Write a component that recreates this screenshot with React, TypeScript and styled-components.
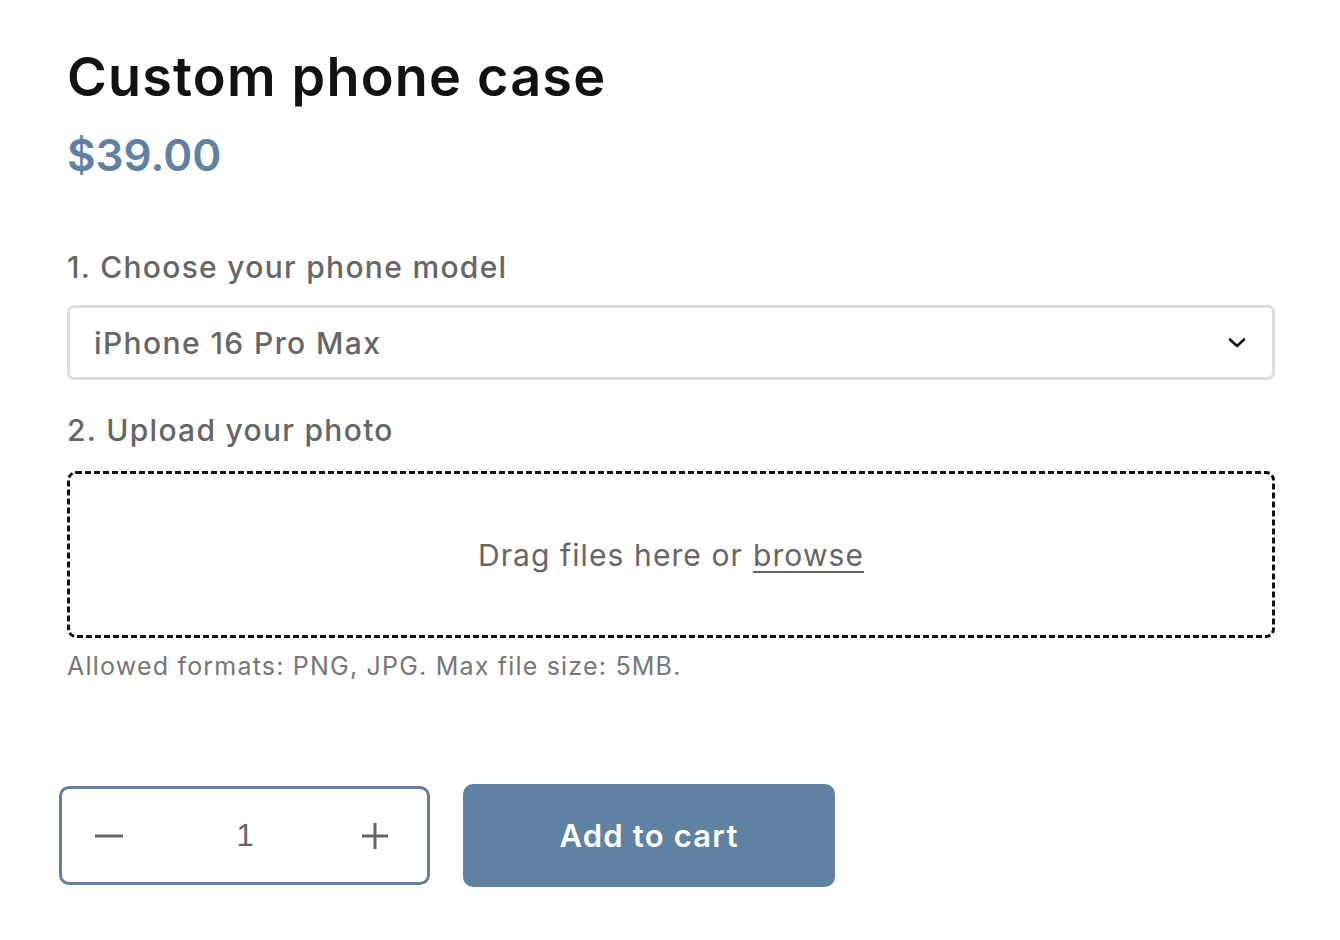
import React from "react";
import styled, { createGlobalStyle } from "styled-components";

const Global = createGlobalStyle`
  html, body { margin: 0; padding: 0; background: #ffffff; }
  body { font-family: "Inter", "Noto Sans", sans-serif; }
  * { box-sizing: border-box; }
`;

const Page = styled.div`
  padding: 44px 65px 0 67px;
  width: 1340px;
  display: flex;
  flex-direction: column;
`;

const Title = styled.h1`
  margin: 0;
  font-size: 54px;
  line-height: 66px;
  font-weight: 600;
  color: #121212;
  letter-spacing: 1.2px;
`;

const Price = styled.div`
  margin-top: 17px;
  font-size: 44px;
  line-height: 56px;
  font-weight: 600;
  color: #5f82a3;
`;

const Label = styled.div<{ $top: number }>`
  margin-top: ${(p) => p.$top}px;
  font-size: 30px;
  line-height: 40px;
  font-weight: 500;
  color: #666666;
  letter-spacing: 1.3px;
`;

const Select = styled.div`
  margin-top: 18px;
  height: 75px;
  border: 3px solid #dedede;
  border-radius: 7px;
  display: flex;
  align-items: center;
  justify-content: space-between;
  padding: 0 26px 0 24px;
  font-size: 30px;
  font-weight: 500;
  color: #666666;
  letter-spacing: 1.4px;
`;

const Drop = styled.div`
  margin-top: 21px;
  height: 167px;
  border: 3px dashed #111111;
  border-radius: 9px;
  display: flex;
  align-items: center;
  justify-content: center;
  font-size: 30px;
  font-weight: 400;
  color: #666666;
  letter-spacing: 1.1px;
`;

const Browse = styled.span`
  text-decoration: underline;
  text-underline-offset: 5px;
  text-decoration-thickness: 2px;
  margin-left: 10px;
`;

const Hint = styled.div`
  margin-top: 12px;
  font-size: 25px;
  line-height: 32px;
  color: #777777;
  letter-spacing: 1.2px;
`;

const Actions = styled.div`
  margin-top: 102px;
  margin-left: -8px;
  display: flex;
  gap: 33px;
  align-items: center;
`;

const Qty = styled.div`
  width: 371px;
  height: 99px;
  border: 3px solid #5f82a3;
  border-radius: 10px;
  display: flex;
  align-items: center;
  justify-content: space-between;
  padding: 0 37px 0 32px;
  font-family: "Liberation Sans", Arial, sans-serif;
  color: #666666;
`;

const QtyBtn = styled.span`
  display: flex;
  align-items: center;
  justify-content: center;
  width: 30px;
  height: 30px;
`;

const QtyValue = styled.span`
  font-size: 31px;
  margin-left: 6px;
`;

const CartButton = styled.button`
  width: 372px;
  height: 103px;
  border: none;
  border-radius: 10px;
  background: #5f82a3;
  color: #ffffff;
  font-family: "Inter", "Noto Sans", sans-serif;
  font-size: 31px;
  font-weight: 600;
  letter-spacing: 1.2px;
  cursor: pointer;
`;

export default function App() {
  return (
    <>
      <Global />
      <Page>
        <Title>Custom phone case</Title>
        <Price>$39.00</Price>
        <Label $top={64}>1. Choose your phone model</Label>
        <Select>
          <span>iPhone 16 Pro Max</span>
          <svg width="18" height="12" viewBox="0 0 18 12" fill="none">
            <path d="M2 2.5 L9 9 L16 2.5" stroke="#111" strokeWidth="2.6" strokeLinecap="round" strokeLinejoin="round" />
          </svg>
        </Select>
        <Label $top={30}>2. Upload your photo</Label>
        <Drop>
          Drag files here or<Browse>browse</Browse>
        </Drop>
        <Hint>Allowed formats: PNG, JPG. Max file size: 5MB.</Hint>
        <Actions>
          <Qty>
            <QtyBtn>
              <svg width="28" height="4" viewBox="0 0 28 4"><rect x="0" y="0.5" width="28" height="3" fill="#666" /></svg>
            </QtyBtn>
            <QtyValue>1</QtyValue>
            <QtyBtn>
              <svg width="26" height="26" viewBox="0 0 26 26"><rect x="0" y="11.5" width="26" height="3" fill="#666" /><rect x="11.5" y="0" width="3" height="26" fill="#666" /></svg>
            </QtyBtn>
          </Qty>
          <CartButton>Add to cart</CartButton>
        </Actions>
      </Page>
    </>
  );
}
